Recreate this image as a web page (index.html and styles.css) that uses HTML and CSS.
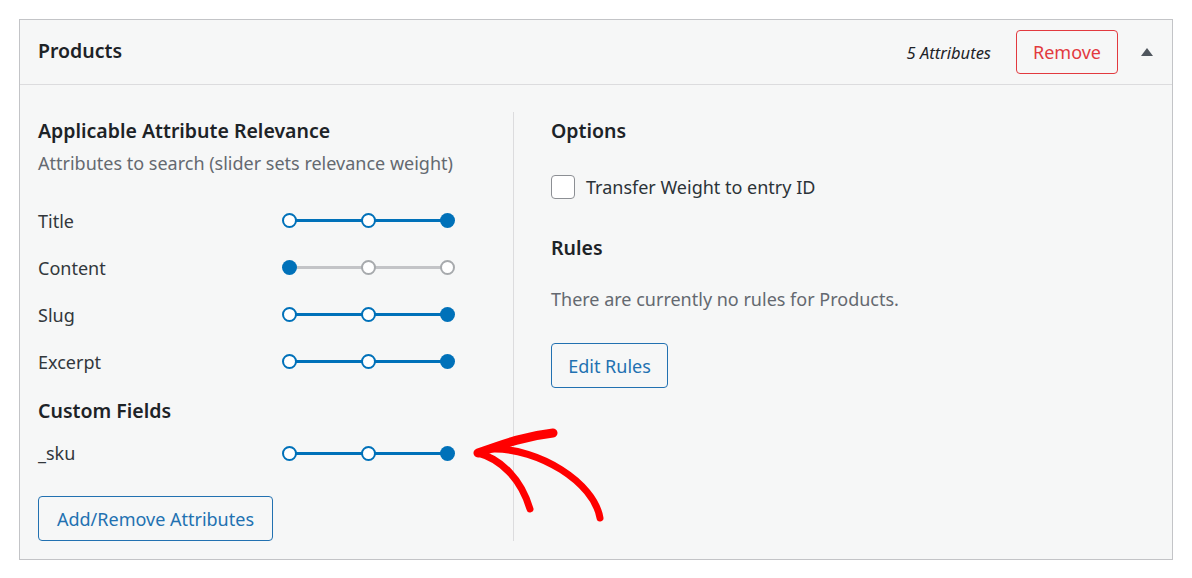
FILE: index.html
```html
<!DOCTYPE html>
<html lang="en">
<head>
<meta charset="utf-8">
<title>Products</title>
<link rel="stylesheet" href="styles.css">
</head>
<body>
<div class="page">
  <section class="panel">
    <header class="panel-head">
      <h2 class="panel-title">Products</h2>
      <div class="head-actions">
        <span class="attr-count">5 Attributes</span>
        <button class="btn btn-danger" type="button">Remove</button>
        <span class="toggle" aria-hidden="true"></span>
      </div>
    </header>
    <div class="panel-body">
      <div class="col col-left">
        <h3 class="sec-title">Applicable Attribute Relevance</h3>
        <p class="sec-desc">Attributes to search (slider sets relevance weight)</p>
        <ul class="attr-list">
          <li class="attr-row"><span class="attr-name">Title</span>
            <span class="slider"><span class="knob hollow"></span><span class="knob hollow"></span><span class="knob filled"></span></span></li>
          <li class="attr-row"><span class="attr-name">Content</span>
            <span class="slider off"><span class="knob filled"></span><span class="knob hollow"></span><span class="knob hollow"></span></span></li>
          <li class="attr-row"><span class="attr-name">Slug</span>
            <span class="slider"><span class="knob hollow"></span><span class="knob hollow"></span><span class="knob filled"></span></span></li>
          <li class="attr-row"><span class="attr-name">Excerpt</span>
            <span class="slider"><span class="knob hollow"></span><span class="knob hollow"></span><span class="knob filled"></span></span></li>
        </ul>
        <h3 class="sec-title custom-title">Custom Fields</h3>
        <ul class="attr-list">
          <li class="attr-row sku-row"><span class="attr-name">_sku</span>
            <span class="slider"><span class="knob hollow"></span><span class="knob hollow"></span><span class="knob filled"></span></span></li>
        </ul>
        <button class="btn btn-primary add-btn" type="button">Add/Remove Attributes</button>
      </div>
      <div class="col col-right">
        <h3 class="sec-title">Options</h3>
        <label class="check-row"><span class="checkbox"></span><span>Transfer Weight to entry ID</span></label>
        <h3 class="sec-title rules-title">Rules</h3>
        <p class="rules-text">There are currently no rules for Products.</p>
        <button class="btn btn-primary edit-btn" type="button">Edit Rules</button>
      </div>
    </div>
    <svg class="arrow" width="140" height="110" viewBox="0 0 140 110" aria-hidden="true">
      <path d="M12 39 C 40 29, 60 22, 87 19" fill="none" stroke="#ff0000" stroke-width="9" stroke-linecap="round"/>
      <path d="M12 39 C 35 45, 55 65, 64 95" fill="none" stroke="#ff0000" stroke-width="7" stroke-linecap="round"/>
      <path d="M27 35 C 72 34, 128 68, 134 104" fill="none" stroke="#ff0000" stroke-width="7" stroke-linecap="round"/>
    </svg>
  </section>
</div>
</body>
</html>
```

FILE: styles.css
```css
* { box-sizing: border-box; }
html, body { margin: 0; padding: 0; }
body {
  background: #ffffff;
  font-family: "Noto Sans", "Open Sans", sans-serif;
  color: #3c434a;
  width: 1192px;
  height: 578px;
  overflow: hidden;
}
.page { padding: 19px 0 0 19px; }
.panel {
  position: relative;
  width: 1154px;
  height: 541px;
  border: 1px solid #c3c4c7;
  background: #f6f7f7;
}
.panel-head {
  height: 65px;
  border-bottom: 1px solid #dcdcde;
  display: flex;
  align-items: center;
  justify-content: space-between;
  padding: 0 19px 0 18px;
}
.panel-title {
  margin: 0 0 2px;
  font-size: 19.5px;
  line-height: 26px;
  font-weight: 600;
  color: #1d2327;
}
.head-actions { display: flex; align-items: center; }
.attr-count {
  font-style: italic;
  font-size: 16.5px;
  color: #1d2327;
  margin-right: 25px;
}
.btn {
  font-family: inherit;
  background: transparent;
  border: 1px solid #2271b1;
  border-radius: 4px;
  color: #2271b1;
  font-size: 18px;
  line-height: 24px;
  padding: 0 16px;
  cursor: pointer;
}
.btn-danger {
  border-color: #e23a3f;
  color: #e23a3f;
  height: 44px;
  width: 102px;
  padding: 0;
}
.toggle {
  width: 0; height: 0;
  margin-left: 23px;
  border-left: 6px solid transparent;
  border-right: 6px solid transparent;
  border-bottom: 8px solid #50575e;
}
.panel-body {
  display: flex;
  padding-top: 27px;
}
.col-left {
  width: 494px;
  padding: 7px 0 0 18px;
  border-right: 1px solid #dcdcde;
}
.col-right {
  padding: 7px 0 0 37px;
}
.sec-title {
  margin: 0;
  font-size: 19.5px;
  line-height: 24px;
  font-weight: 600;
  color: #1d2327;
}
.sec-desc {
  margin: 8px 0 0;
  font-size: 18px;
  line-height: 24px;
  color: #646970;
}
.attr-list { list-style: none; margin: 0; padding: 0; }
.sec-desc + .attr-list { margin-top: 22px; }
.attr-row {
  display: flex;
  align-items: center;
  height: 47px;
  font-size: 18px;
  line-height: 24px;
  color: #32373c;
}
.attr-name { width: 243px; }
.slider {
  position: relative;
  width: 174px;
  height: 16px;
  display: flex;
  justify-content: space-between;
  align-items: center;
}
.slider::before {
  content: "";
  position: absolute;
  left: 8px; right: 8px; top: 6.5px;
  height: 3px;
  background: #0071b9;
}
.slider.off::before { background: #c3c4c7; }
.knob {
  position: relative;
  width: 16px; height: 16px;
  display: flex;
  align-items: center;
  justify-content: center;
}
.knob::after {
  content: "";
  display: block;
  border-radius: 50%;
}
.knob.hollow::after {
  width: 11px; height: 11px;
  background: #fff;
  border: 2px solid #0071b9;
}
.slider.off .knob.hollow::after { border-color: #a7aaad; }
.knob.filled::after {
  width: 15px; height: 15px;
  background: #0071b9;
}
.custom-title { margin-top: 14px; }
.sku-row { height: 40px; margin-top: 10px; }
.add-btn {
  margin-top: 23px;
  height: 45px;
  width: 235px;
  padding: 0;
}
.check-row {
  display: flex;
  align-items: center;
  margin-top: 32px;
  font-size: 18px;
  line-height: 24px;
  color: #2c3338;
}
.checkbox {
  width: 24px; height: 24px;
  border: 1px solid #8c8f94;
  border-radius: 4px;
  background: #fff;
  margin-right: 11px;
}
.rules-title { margin-top: 37px; }
.rules-text {
  margin: 27px 0 0;
  font-size: 18px;
  line-height: 24px;
  color: #646970;
}
.edit-btn {
  margin-top: 32px;
  height: 45px;
  width: 117px;
  padding: 0;
}
.arrow {
  position: absolute;
  left: 446px;
  top: 394px;
  overflow: visible;
}
```
